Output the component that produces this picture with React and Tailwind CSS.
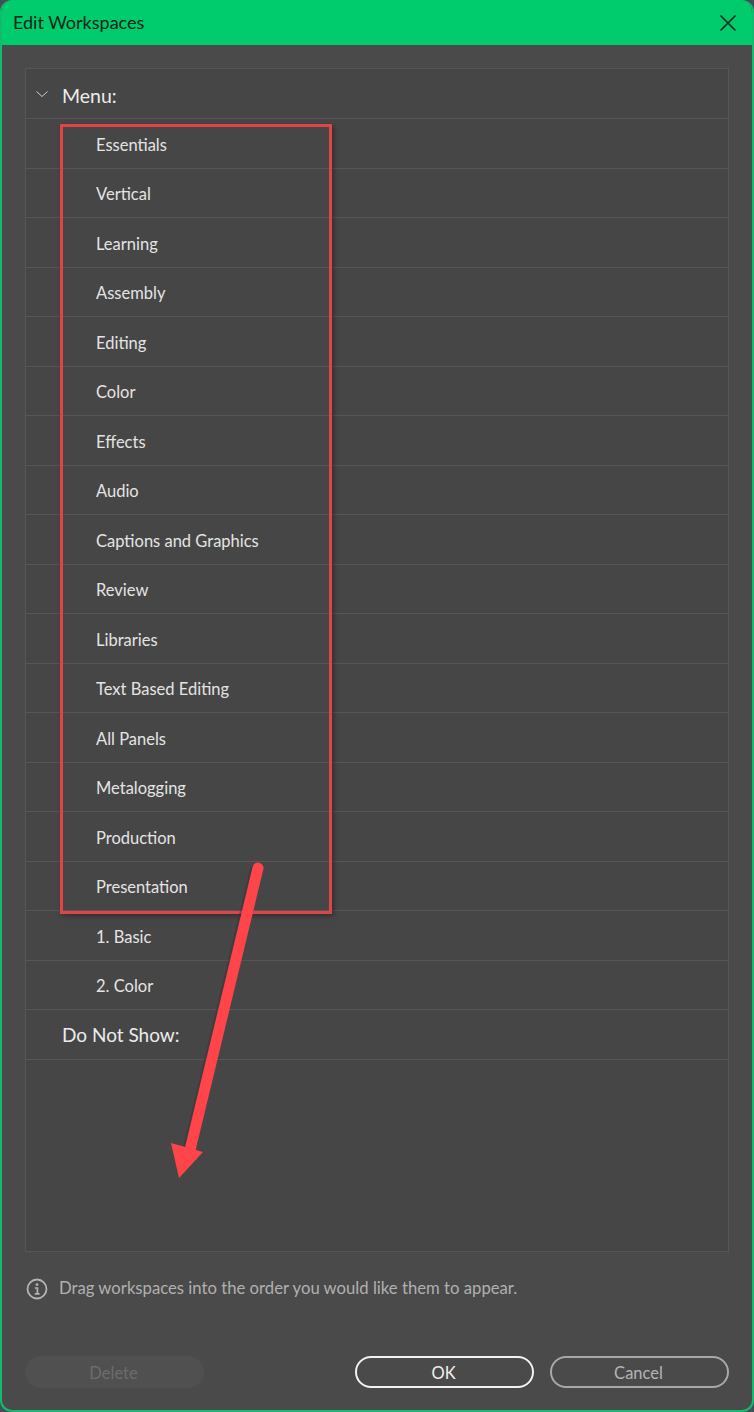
import React from "react";

const workspaces = [
    "Essentials",
    "Vertical",
    "Learning",
    "Assembly",
    "Editing",
    "Color",
    "Effects",
    "Audio",
    "Captions and Graphics",
    "Review",
    "Libraries",
    "Text Based Editing",
    "All Panels",
    "Metalogging",
    "Production",
    "Presentation",
    "1. Basic",
    "2. Color",
];

function Row({ name }) {
    return (
        <div className="h-[49.5px] flex items-center pl-[70px] pt-[3px] text-[16.5px] text-[#e4e4e4] border-b border-[#565656]">
            {name}
        </div>
    );
}

function App() {
    return (
        <div
            className="relative w-[754px] h-[1412px] bg-[#3f5058] overflow-hidden"
            style={{ fontFamily: '"Lato", "Noto Sans", sans-serif' }}
        >
            <div className="h-full flex flex-col rounded-[12px] border-2 border-t-0 border-[#12bb6d] bg-[#4a4a4a] overflow-hidden">
                <div className="h-[45px] shrink-0 -mx-[2px] bg-[#00cc6e] flex items-center justify-between pl-[13px] pr-[17px]">
                    <span className="text-[18px] text-[#0b2416]">Edit Workspaces</span>
                    <svg width="18" height="18" viewBox="0 0 18 18" fill="none" stroke="#12261b" strokeWidth="1.6">
                        <path d="M1.5 1.5 L16.5 16.5 M16.5 1.5 L1.5 16.5" />
                    </svg>
                </div>

                <div className="mt-[23px] ml-[23px] mr-[23px] h-[1184px] shrink-0 border border-[#565656] bg-[#464646]">
                    <div className="h-[50.4px] flex items-center border-b border-[#565656]">
                        <svg className="ml-[9px]" width="14" height="14" viewBox="0 0 14 14" fill="none" stroke="#cfcfcf" strokeWidth="1">
                            <path d="M1.5 4.5 L7 9.5 L12.5 4.5" />
                        </svg>
                        <span className="ml-[13px] pt-[4px] text-[19.5px] text-[#ececec]">Menu:</span>
                    </div>
                    {workspaces.map((name) => (
                        <Row key={name} name={name} />
                    ))}
                    <div className="h-[49.5px] flex items-center pl-[36px] pt-[2px] text-[19px] text-[#ececec] border-b border-[#565656]">
                        Do Not Show:
                    </div>
                </div>

                <div className="mt-[24px] ml-[24px] flex items-center gap-[11px] text-[16.7px] text-[#b0b0b0]">
                    <svg width="22" height="22" viewBox="0 0 22 22" fill="none" stroke="#b4b4b4">
                        <circle cx="11" cy="11" r="9.5" strokeWidth="1.8" />
                        <circle cx="11" cy="6.6" r="1.4" fill="#b4b4b4" stroke="none" />
                        <path d="M8.8 10 H11.4 V15.6 M8.8 15.8 H13.6" strokeWidth="1.7" />
                    </svg>
                    <span>Drag workspaces into the order you would like them to appear.</span>
                </div>

                <div className="mt-[55px] ml-[23px] mr-[23px] flex items-center text-[16.5px]">
                    <div className="w-[179px] h-[32px] pt-[2px] pr-[2px] rounded-full bg-[#505050] flex items-center justify-center text-[#6c6c6c]">
                        Delete
                    </div>
                    <div className="ml-auto w-[179px] h-[32px] pt-[2px] pr-[2px] rounded-full border-2 border-[#f2f2f2] flex items-center justify-center text-[#f0f0f0]">
                        OK
                    </div>
                    <div className="ml-[16px] w-[179px] h-[32px] pt-[2px] pr-[2px] rounded-full border-2 border-[#a8a8a8] flex items-center justify-center text-[#b4b4b4]">
                        Cancel
                    </div>
                </div>
            </div>

            {/* annotation overlay */}
            <div className="absolute left-[60px] top-[124px] w-[272px] h-[790px] border-[3px] border-[#e04348] shadow-[2px_2px_5px_rgba(0,0,0,0.35)]" />
            <svg className="absolute left-0 top-0" width="754" height="1412" fill="none">
                <path d="M258 868 L190 1152" stroke="#2e2e2e" strokeOpacity="0.35" strokeWidth="11" strokeLinecap="round" transform="translate(-3 3)" />
                <path d="M258 868 L190 1150" stroke="#ff444a" strokeWidth="11" strokeLinecap="round" />
                <path d="M171 1143 L203 1152 L179 1178 Z" fill="#ff444a" />
            </svg>
        </div>
    );
}

export default App;
